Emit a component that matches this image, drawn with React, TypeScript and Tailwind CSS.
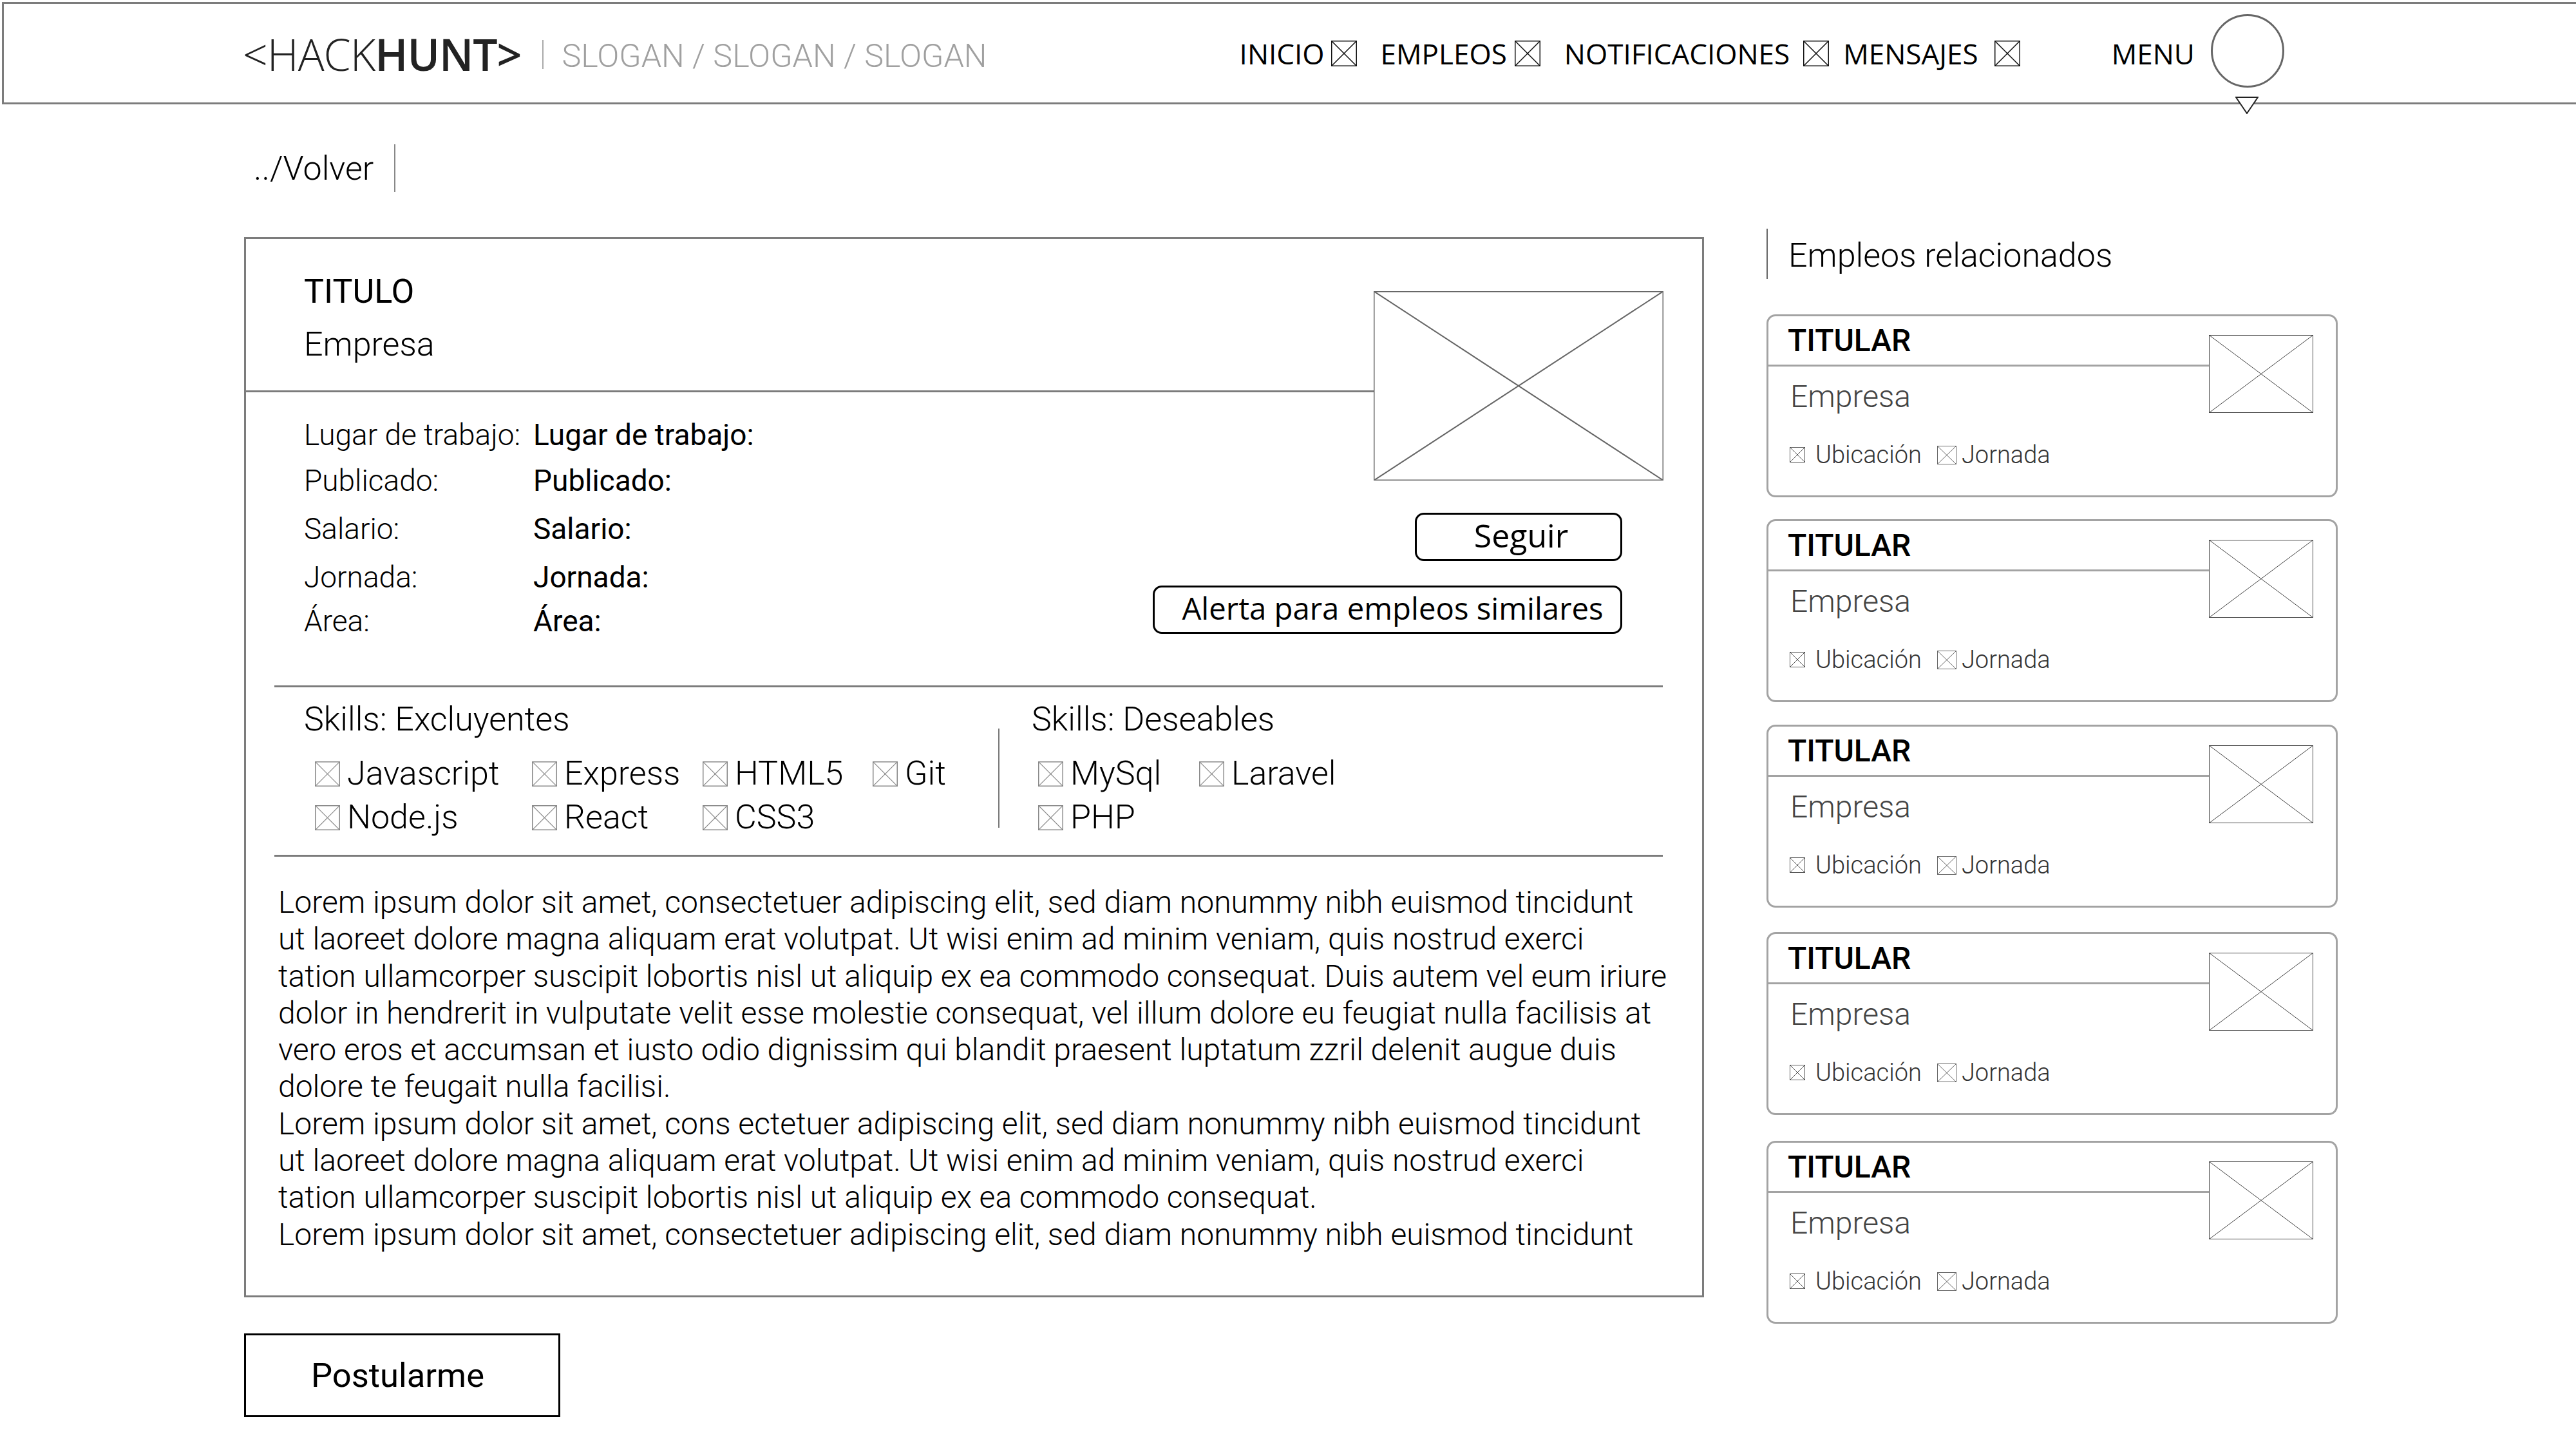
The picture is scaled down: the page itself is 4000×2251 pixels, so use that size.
const openSans = "[font-family:'Open_Sans',sans-serif]";

const navItems = [
  { label: 'INICIO', gap: 'ml-[10px]', after: 'mr-[37px]' },
  { label: 'EMPLEOS', gap: 'ml-[12px]', after: 'mr-[37px]' },
  { label: 'NOTIFICACIONES', gap: 'ml-[21px]', after: 'mr-[22px]' },
  { label: 'MENSAJES', gap: 'ml-[25px]', after: '' },
];

const details = [
  { label: 'Lugar de trabajo:', row: 'h-[72px]' },
  { label: 'Publicado:', row: 'h-[71px]' },
  { label: 'Salario:', row: 'h-[79px]' },
  { label: 'Jornada:', row: 'h-[71px]' },
  { label: 'Área:', row: 'h-[65px]' },
];

const lorem = [
  'Lorem ipsum dolor sit amet, consectetuer adipiscing elit, sed diam nonummy nibh euismod tincidunt',
  'ut laoreet dolore magna aliquam erat volutpat. Ut wisi enim ad minim veniam, quis nostrud exerci',
  'tation ullamcorper suscipit lobortis nisl ut aliquip ex ea commodo consequat. Duis autem vel eum iriure',
  'dolor in hendrerit in vulputate velit esse molestie consequat, vel illum dolore eu feugiat nulla facilisis at',
  'vero eros et accumsan et iusto odio dignissim qui blandit praesent luptatum zzril delenit augue duis',
  'dolore te feugait nulla facilisi.',
  'Lorem ipsum dolor sit amet, cons ectetuer adipiscing elit, sed diam nonummy nibh euismod tincidunt',
  'ut laoreet dolore magna aliquam erat volutpat. Ut wisi enim ad minim veniam, quis nostrud exerci',
  'tation ullamcorper suscipit lobortis nisl ut aliquip ex ea commodo consequat.',
  'Lorem ipsum dolor sit amet, consectetuer adipiscing elit, sed diam nonummy nibh euismod tincidunt',
];

const relatedGaps = ['mt-[55px]', 'mt-[34px]', 'mt-[35px]', 'mt-[38px]', 'mt-[40px]'];

function XBox({ className, stroke = '#777', border = 3, diag = 1.5 }: { className: string; stroke?: string; border?: number; diag?: number }) {
  return (
    <svg className={className} viewBox="0 0 100 100" preserveAspectRatio="none">
      <rect x="0" y="0" width="100" height="100" fill="none" stroke={stroke} strokeWidth={border} vectorEffect="non-scaling-stroke" />
      <path d="M0 0 L100 100 M100 0 L0 100" fill="none" stroke={stroke} strokeWidth={diag} vectorEffect="non-scaling-stroke" />
    </svg>
  );
}

function Skill({ name }: { name: string }) {
  return (
    <div className="flex h-[68px] items-center">
      <XBox className="h-[39px] w-[39px] shrink-0" stroke="#888" border={3} diag={1.2} />
      <span className="ml-[11px] whitespace-nowrap">{name}</span>
    </div>
  );
}

function RelatedCard({ className }: { className: string }) {
  return (
    <div className={`flex h-[284px] w-[887px] rounded-[14px] border-[3px] border-[#a3a3a3] ${className}`}>
      <div className="min-w-0 flex-1">
        <div className="flex h-[78px] items-center border-b-[3px] border-[#a3a3a3] pl-[30px] text-[48px] font-medium text-black">
          TITULAR
        </div>
        <div className="mt-[12px] pl-[34px] text-[48px] leading-[70px] font-light text-[#444]">Empresa</div>
        <div className="mt-[30px] flex items-center pl-[33px] text-[38px] leading-[50px] font-light text-[#333]">
          <XBox className="h-[24px] w-[24px]" stroke="#555" border={2} diag={1} />
          <span className="ml-[16px]">Ubicación</span>
          <XBox className="ml-[24px] h-[29px] w-[30px]" stroke="#666" border={2} diag={1} />
          <span className="ml-[8px]">Jornada</span>
        </div>
      </div>
      <XBox className="mt-[29px] mr-[35px] h-[121px] w-[162px] shrink-0" stroke="#444" border={2} diag={1} />
    </div>
  );
}

export default function App() {
  return (
    <div className="h-[2251px] w-[4000px] overflow-hidden bg-white [font-family:Roboto,sans-serif] text-black">
      {/* header */}
      <header className="relative mt-[3px] ml-[3px] flex h-[159px] w-[4010px] items-center border-y-[3px] border-l-[3px] border-[#7c7c7c] pl-[371px]">
        <div className={`${openSans} mt-[3px] text-[68px] leading-none font-light tracking-[-1px] whitespace-nowrap text-[#222]`}>
          &lt;HACK<span className="font-semibold">HUNT&gt;</span>
        </div>
        <div className="mr-[28px] ml-[33px] mt-[3px] h-[45px] w-[2px] bg-[#aaa]" />
        <div className="mt-[9px] text-[50.3px] font-light whitespace-nowrap text-[#a0a0a0]">SLOGAN / SLOGAN / SLOGAN</div>
        <nav className={`${openSans} ml-[392px] flex items-center text-[44px] whitespace-nowrap`}>
          {navItems.map((item) => (
            <div key={item.label} className={`flex items-center ${item.after}`}>
              <span>{item.label}</span>
              <XBox className={`${item.gap} h-[40px] w-[40px]`} stroke="#111" border={3} diag={1.5} />
            </div>
          ))}
          <span className="ml-[142px]">MENU</span>
          <div className="-mt-[8px] ml-[25px] h-[114px] w-[114px] rounded-full border-[3px] border-[#666]" />
        </nav>
        <svg className="absolute top-[143px] left-[3465px] h-[28px] w-[36px]" viewBox="0 0 36 28">
          <path d="M1 2 H35 L18 27 Z" fill="white" stroke="#222" strokeWidth="2" />
        </svg>
      </header>

      {/* back link */}
      <div className="mt-[62px] ml-[394px] flex h-[74px] items-center text-[52px] font-light">
        <span className="mt-[2px]">../Volver</span>
        <div className="ml-[32px] h-[74px] w-[2px] bg-[#888]" />
      </div>

      <div className="mt-[70px] ml-[379px] flex items-start">
        {/* left column */}
        <div className="w-[2267px]">
          <main className="h-[1646px] border-[3px] border-[#7c7c7c]">
            <div className="flex">
              <div className="min-w-0 flex-1">
                <div className="h-[238px] border-b-[3px] border-[#7c7c7c] pt-[42px] pl-[90px]">
                  <div className="text-[52px] leading-[80px]">TITULO</div>
                  <div className="mt-[2px] text-[52px] leading-[80px] font-light">Empresa</div>
                </div>
                <div className="mt-[30px] pl-[90px] text-[46px]">
                  {details.map((d) => (
                    <div key={d.label} className={`flex items-center ${d.row}`}>
                      <span className="w-[356px] font-light">{d.label}</span>
                      <span>{d.label}</span>
                    </div>
                  ))}
                </div>
              </div>
              <div className="mt-[81px] mr-[60px] w-[450px] shrink-0">
                <XBox className="block h-[294px] w-[450px]" stroke="#666" border={3} diag={2} />
                <div className={`${openSans} mt-[50px] mr-[64px] flex flex-col items-end`}>
                  <div className="flex h-[75px] w-[322px] items-center justify-center rounded-[14px] border-[3px] border-black pb-[4px] pl-[8px] text-[50px]">Seguir</div>
                  <div className="mt-[38px] flex h-[75px] w-[729px] shrink-0 items-center justify-center rounded-[14px] border-[3px] border-black pb-[4px] pl-[16px] text-[47.3px] whitespace-nowrap">
                    Alerta para empleos similares
                  </div>
                </div>
              </div>
            </div>

            {/* skills */}
            <div className="mx-[44px] mt-[67px] flex h-[266px] w-[2156px] border-y-[3px] border-[#7c7c7c] text-[52px] font-light">
              <div className="w-[1124px] pt-[13px] pl-[46px]">
                <div className="leading-[74px]">Skills: Excluyentes</div>
                <div className="mt-[13px] flex pl-[17px]">
                  <div className="w-[337px]">
                    <Skill name="Javascript" />
                    <Skill name="Node.js" />
                  </div>
                  <div className="w-[265px]">
                    <Skill name="Express" />
                    <Skill name="React" />
                  </div>
                  <div className="w-[264px]">
                    <Skill name="HTML5" />
                    <Skill name="CSS3" />
                  </div>
                  <Skill name="Git" />
                </div>
              </div>
              <div className="mt-[64px] h-[154px] w-[2px] bg-[#777]" />
              <div className="pt-[13px] pl-[50px]">
                <div className="leading-[74px]">Skills: Deseables</div>
                <div className="mt-[13px] flex pl-[10px]">
                  <div className="w-[250px]">
                    <Skill name="MySql" />
                    <Skill name="PHP" />
                  </div>
                  <Skill name="Laravel" />
                </div>
              </div>
            </div>

            <div className="mt-[42px] ml-[50px] text-[48px] leading-[57.3px] font-light whitespace-nowrap">
              {lorem.map((line, i) => (
                <div key={i}>{line}</div>
              ))}
            </div>
          </main>

          <button className="mt-[56px] flex h-[130px] w-[491px] items-center justify-center border-[3px] border-black pr-[14px] text-[52.5px]">
            Postularme
          </button>
        </div>

        {/* related */}
        <aside className="-mt-[13px] ml-[97px]">
          <div className="flex h-[78px] items-center border-l-[2px] border-[#666] pt-[6px] pl-[32px] text-[52px] font-light">
            Empleos relacionados
          </div>
          {relatedGaps.map((gap, i) => (
            <RelatedCard key={i} className={gap} />
          ))}
        </aside>
      </div>
    </div>
  );
}
